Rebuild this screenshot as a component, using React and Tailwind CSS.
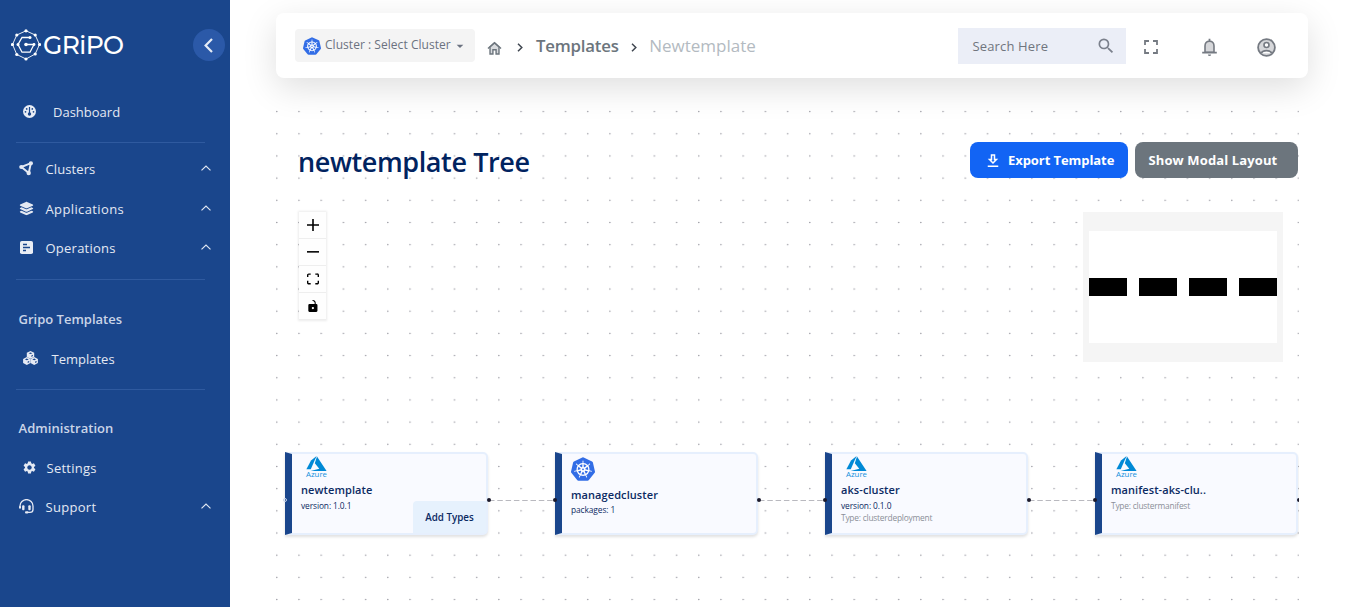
import React from "react";
import { FaLayerGroup } from "react-icons/fa6";
import { MdSettings, MdSearch, MdArrowDropDown, MdOutlineDownload } from "react-icons/md";
import { SiKubernetes } from "react-icons/si";

function GripoMark() {
  const outer = [[15, 1.8], [24.2, 6], [28.5, 15.5], [24.2, 25], [15, 30], [5.8, 25.5], [1.5, 15.5], [5.8, 6]];
  return (
    <svg className="h-8 w-[30px] shrink-0" viewBox="0 0 30 32" fill="none" stroke="#fff">
      <polygon points={outer.map((p) => p.join(",")).join(" ")} strokeWidth="0.9" />
      {outer.map(([x, y]) => (
        <circle key={x + "-" + y} cx={x} cy={y} r="1.6" fill="#fff" stroke="none" />
      ))}
      <path d="M19 8.5H11L7 15.5L11 23.2H19L23 15.5H15" strokeWidth="1.3" />
      <circle cx="19" cy="8.5" r="1.5" fill="#fff" stroke="none" />
      <circle cx="7" cy="15.5" r="1.5" fill="#fff" stroke="none" />
      <circle cx="15" cy="15.5" r="1.8" fill="#fff" stroke="none" />
      <circle cx="23" cy="15.5" r="1.4" fill="#fff" stroke="none" />
    </svg>
  );
}

function GaugeIcon() {
  return (
    <svg className="h-[13px] w-[13px]" viewBox="0 0 13 13">
      <circle cx="6.5" cy="6.5" r="6.5" fill="#e9edf5" />
      <g fill="#1a468c">
        <rect x="5.9" y="2" width="1.2" height="6.5" />
        <circle cx="6.5" cy="9" r="1.7" />
        <circle cx="3.7" cy="3.9" r="0.85" />
        <circle cx="9.3" cy="3.9" r="0.85" />
        <circle cx="2.5" cy="6.8" r="0.85" />
        <circle cx="10.5" cy="6.8" r="0.85" />
      </g>
    </svg>
  );
}

function NodesIcon() {
  return (
    <svg className="h-[15px] w-[15px]" viewBox="0 0 15 15" fill="#e4e9f3" stroke="#e4e9f3">
      <path d="M2.4 6L11.8 2.2L9.8 12Z" fill="none" strokeWidth="1.9" />
      <circle cx="2.3" cy="6" r="2.1" stroke="none" />
      <circle cx="11.9" cy="2.3" r="2.1" stroke="none" />
      <circle cx="9.7" cy="12" r="2.2" stroke="none" />
    </svg>
  );
}

function ReportIcon() {
  return (
    <svg className="h-[13px] w-[13px]" viewBox="0 0 13 13">
      <rect width="13" height="13" rx="1.8" fill="#e9edf5" />
      <path d="M3 3.5H7M3 6.5H10M3 9.5H6" stroke="#1a468c" strokeWidth="1.4" />
    </svg>
  );
}

function CubesIcon() {
  const cubes = [[7.5, 3.9], [3.8, 10], [11.2, 10]];
  return (
    <svg className="h-[14px] w-[15px]" viewBox="0 0 15 14">
      {cubes.map(([x, y]) => (
        <g key={x} transform={`translate(${x} ${y})`}>
          <path d="M0 -3.9L3.7 -2.1V2.1L0 3.9L-3.7 2.1V-2.1Z" fill="#e6eaf4" />
          <path d="M0 -2.5L1.9 -1.6L0 -0.8L-1.9 -1.6Z" fill="#1a468c" />
          <path d="M0.9 0.6L2.4 -0.1V1.2L0.9 2Z" fill="#1a468c" />
        </g>
      ))}
    </svg>
  );
}

function SupportIcon() {
  return (
    <svg className="h-[15px] w-[15px]" viewBox="0 0 15 15" fill="none" stroke="#e6eaf4">
      <path d="M1 9V7A6.4 6.3 0 0 1 14 7V10.5C14 12.3 12.8 13.4 11 13.4H8" strokeWidth="1.3" />
      <path d="M1 7.2V9.6" strokeWidth="2" />
      <rect x="3.1" y="6.3" width="2.4" height="4.9" rx="0.9" fill="#e6eaf4" stroke="none" />
      <rect x="9.3" y="6.3" width="2.4" height="4.9" rx="0.9" fill="#e6eaf4" stroke="none" />
      <rect x="6" y="12.2" width="3.4" height="2.4" rx="1" fill="#e6eaf4" stroke="none" />
    </svg>
  );
}

function Chevron() {
  return (
    <svg className="mb-[2px] ml-auto h-[6px] w-[10px]" viewBox="0 0 10 6" fill="none" stroke="#dfe6f2" strokeWidth="1.2">
      <path d="M0.5 5.4L5 1L9.5 5.4" />
    </svg>
  );
}

function NavItem({ icon, label, className, gap, expandable }) {
  return (
    <div className={"flex items-center pr-[19px] text-[#e4e9f3] " + className}>
      <span className="flex shrink-0 items-center justify-center pb-[2px]">{icon}</span>
      <span className={"text-[13px] leading-5 " + gap}>{label}</span>
      {expandable && <Chevron />}
    </div>
  );
}

function Divider() {
  return <div className="ml-4 h-px w-[189px] shrink-0 bg-[#2f5a9f]" />;
}

function SectionTitle({ children, className }) {
  return <div className={"pl-[18.5px] text-[13px] leading-5 font-semibold text-[#cad5e8] " + className}>{children}</div>;
}

function Sidebar() {
  return (
    <aside className="flex h-full w-[230px] shrink-0 flex-col bg-[#1a468c]">
      <div className="flex h-[90px] items-center pr-[5px] pl-[11px]">
        <GripoMark />
        <span className="ml-[2px] font-[Montserrat,Lato,sans-serif] text-[25px] leading-8 font-medium tracking-[-0.6px] text-white">GRiPO</span>
        <button className="ml-auto flex h-8 w-8 items-center justify-center rounded-full bg-[#2b59a8] pr-[2px]">
          <svg className="h-[15px] w-[9px]" viewBox="0 0 9 15" fill="none" stroke="#e6ecf6" strokeWidth="2.2">
            <path d="M8 1L1.6 7.5L8 14" />
          </svg>
        </button>
      </div>
      <NavItem className="mt-[11px] h-[22px] pl-[23px]" gap="ml-[17px]" label="Dashboard" icon={<GaugeIcon />} />
      <div className="h-[19px]" />
      <Divider />
      <NavItem className="mt-[15px] h-[22px] pl-[19px]" gap="ml-[11.5px] tracking-[0.1px]" label="Clusters" icon={<NodesIcon />} expandable />
      <NavItem className="mt-[18px] h-[22px] pl-[19px]" gap="ml-[11.5px] tracking-[0.38px]" label="Applications" icon={<FaLayerGroup size={15} />} expandable />
      <NavItem className="mt-[17px] h-[22px] pl-5" gap="ml-[12.5px] tracking-[0.24px]" label="Operations" icon={<ReportIcon />} expandable />
      <div className="h-5" />
      <Divider />
      <SectionTitle className="mt-[29px]">Gripo Templates</SectionTitle>
      <NavItem className="mt-[19px] h-[22px] pl-[23px]" gap="ml-[13.5px]" label="Templates" icon={<CubesIcon />} />
      <div className="h-[19px]" />
      <Divider />
      <SectionTitle className="mt-[28px] tracking-[0.05px]">Administration</SectionTitle>
      <NavItem className="mt-[19px] h-[22px] pl-[22px]" gap="ml-[9.5px] tracking-[0.25px]" label="Settings" icon={<MdSettings size={15} />} />
      <NavItem className="mt-[17px] h-[22px] pl-[19px]" gap="ml-[11.5px] tracking-[0.3px]" label="Support" icon={<SupportIcon />} expandable />
    </aside>
  );
}

function Kubernetes({ size }) {
  return (
    <span className="flex items-center justify-center rounded-full bg-[radial-gradient(circle,#fff_60%,transparent_61%)]">
      <SiKubernetes size={size} color="#326de6" />
    </span>
  );
}

function Crumb() {
  return (
    <svg className="h-[9px] w-[6px] shrink-0" viewBox="0 0 6 9" fill="none" stroke="#3f4650" strokeWidth="1.5">
      <path d="M1 0.8L4.8 4.5L1 8.2" />
    </svg>
  );
}

function Header() {
  return (
    <header className="relative z-10 mt-[13px] ml-[46px] flex h-[65px] w-[1032px] shrink-0 items-center rounded-lg bg-white shadow-[0_10px_34px_rgba(0,0,0,0.13)]">
      <div className="ml-[19px] flex h-[33px] w-[180px] items-center rounded bg-[#f4f4f4] pl-2">
        <Kubernetes size={18} />
        <span className="ml-[4px] pb-[1px] text-[12px] leading-4 tracking-[0.04px] whitespace-nowrap text-[#6b7280]">Cluster : Select Cluster</span>
        <MdArrowDropDown className="ml-[1px] shrink-0" size={16} color="#6b7280" />
      </div>
      <svg className="mt-[5px] ml-[12px] h-[14px] w-[15px] shrink-0" viewBox="0 0 16 15" fill="#d9dbde" stroke="#6c757d" strokeWidth="1.5">
        <path d="M1 8L8 1.7L15 8" fill="none" />
        <path d="M3.2 6.4V13.9H6.3V9.3H9.7V13.9H12.8V6.4L8 2.1Z" />
      </svg>
      <div className="mt-[3px] ml-[15px] flex"><Crumb /></div>
      <span className="mt-[1px] ml-[13px] text-[16.8px] leading-6 font-semibold tracking-[-0.2px] text-[#6c757d]">Templates</span>
      <div className="mt-[4px] ml-[12px] flex"><Crumb /></div>
      <span className="ml-[12.5px] text-[17px] leading-6 text-[#b3bac1]">Newtemplate</span>
      <div className="mr-[18px] ml-auto flex h-9 w-[168px] shrink-0 items-center justify-between bg-[#ebeef7] pr-[10px] pl-[14.5px]">
        <span className="text-[13px] leading-5 tracking-[0.15px] text-[#70757e]">Search Here</span>
        <MdSearch size={20} color="#7b808c" />
      </div>
      <svg className="mt-[3px] h-[14px] w-[14px] shrink-0" viewBox="0 0 14 14" fill="none" stroke="#757a82" strokeWidth="1.8">
        <path d="M1 5V1H5M9 1H13V5M13 9V13H9M5 13H1V9" />
      </svg>
      <svg className="mt-[3px] ml-[43.5px] h-[18px] w-[15px] shrink-0" viewBox="0 0 15 18" fill="#d6d7da" stroke="#757a82">
        <path d="M3 14.3V8C3 5 4.8 3.2 7.5 3.2S12 5 12 8V14.3Z" strokeWidth="1.6" />
        <path d="M0.2 14.6H14.8M7.5 0.8V3" strokeWidth="1.8" fill="none" />
        <path d="M5.9 16.4H9.1A1.6 1.6 0 0 1 5.9 16.4Z" fill="#757a82" stroke="none" />
      </svg>
      <svg className="mt-[3px] mr-[32.5px] ml-10 h-[19px] w-[19px] shrink-0" viewBox="0 0 19 19" fill="none" stroke="#757a82" strokeWidth="1.8">
        <circle cx="9.5" cy="9.5" r="8.4" fill="#d6d7da" />
        <circle cx="9.5" cy="7" r="2.5" fill="#fff" strokeWidth="1.6" />
        <path d="M4 15.3C6.2 11.7 12.8 11.7 15 15.3" fill="#fff" strokeWidth="1.7" />
      </svg>
    </header>
  );
}

function DotGrid() {
  return (
    <svg className="absolute inset-0 h-full w-full">
      <defs>
        <pattern id="dots" x="0" y="2.5" width="22.21" height="22.18" patternUnits="userSpaceOnUse">
          <circle cx="0.8" cy="11.1" r="0.72" fill="#91919a" />
        </pattern>
      </defs>
      <rect width="100%" height="100%" fill="url(#dots)" />
    </svg>
  );
}

function Azure() {
  return (
    <div className="ml-[14px] flex w-[21px] flex-col items-center">
      <svg className="h-[15px] w-[21px]" viewBox="0 0 21 15" fill="#0089d6">
        <path d="M10.6 0L5 4.6L0.4 13.2H4.8Z" />
        <path d="M11 0.4L8.8 7.3L13.3 12.8L4.6 15H20.6Z" />
      </svg>
      <span className="text-[7.8px] leading-[7px] text-[#1590dc]">Azure</span>
    </div>
  );
}

function Node({ className, kube, title, lines, action }) {
  return (
    <div className={"absolute top-[354px] h-[83px] w-[203px] rounded-[5px] rounded-l-none border-2 border-l-[7px] border-[#e6effd] border-l-[#1a468c] bg-[#f9faff] shadow-[0_2px_3px_rgba(0,0,0,0.12)] " + className}>
      {kube ? (
        <div className="mt-[3px] ml-[9px] flex h-[30px] items-start"><Kubernetes size={24} /></div>
      ) : (
        <div className="mt-[2px] h-[26px]"><Azure /></div>
      )}
      <div className="ml-[9px] text-[11px] leading-4 font-semibold tracking-[0.08px] text-[#0b2a63]">{title}</div>
      {lines.map(([text, tone], i) => (
        <div key={text} className={"ml-[9px] text-[8.4px] leading-3 " + tone + (i === 0 ? (kube ? " mt-[1px]" : " mt-[2px]") : "")}>{text}</div>
      ))}
      {action && (
        <div className="absolute right-0 bottom-0 flex h-8 w-[73px] items-center justify-center rounded-tl bg-[#e6f1fd] pt-[2px] text-[9.8px] font-semibold text-[#0b2a63]">{action}</div>
      )}
    </div>
  );
}

function Handle({ className }) {
  return <span className={"absolute top-[400px] h-1 w-1 rounded-full " + className} />;
}

function Edge({ className }) {
  return (
    <svg className={"absolute top-[401px] h-[3px] w-[66px] " + className} viewBox="0 0 66 3">
      <path d="M0 1.5H66" stroke="#b9b9bf" strokeWidth="1.1" strokeDasharray="5.5 2.8" />
    </svg>
  );
}

const navy = "text-[#0b2a63] tracking-[-0.1px]";
const gray = "text-[#8b8f98] tracking-[-0.22px]";

function ControlButton({ children }) {
  return <button className="flex h-[27px] w-[27px] items-center justify-center border-b border-[#eee] bg-[#fefefe]">{children}</button>;
}

function Canvas() {
  return (
    <section className="relative mt-5 ml-[46px] min-h-0 w-[1023px] flex-1 overflow-hidden">
      <DotGrid />
      <div className="relative mt-11 flex h-9 items-center pr-[1px] pl-[22px]">
        <h1 className="pt-[3px] text-[27px] leading-9 font-semibold tracking-[-0.4px] text-[#01235f]">newtemplate Tree</h1>
        <button className="ml-auto flex h-9 w-[158px] items-center rounded-lg bg-[#1264f4] pt-[1px] pl-[14px] text-[13px] font-bold text-white">
          <MdOutlineDownload size={18} />
          <span className="ml-[6px] tracking-[-0.07px] whitespace-nowrap">Export Template</span>
        </button>
        <button className="ml-[7px] h-9 w-[163px] rounded-lg bg-[#6c757d] pt-[1px] pl-[13.5px] text-left text-[13px] font-bold tracking-[0.12px] whitespace-nowrap text-white">Show Modal Layout</button>
      </div>

      <div className="absolute top-[114px] left-[23px] flex flex-col shadow-[0_0_2px_1px_rgba(0,0,0,0.08)]">
        <ControlButton>
          <svg className="h-3 w-3" viewBox="0 0 32 32"><path d="M32 18.133H18.133V32h-4.266V18.133H0v-4.266h13.867V0h4.266v13.867H32z" /></svg>
        </ControlButton>
        <ControlButton>
          <svg className="h-[2px] w-3" viewBox="0 0 32 5"><path d="M0 0h32v4.2H0z" /></svg>
        </ControlButton>
        <ControlButton>
          <svg className="h-3 w-3" viewBox="0 0 32 30"><path d="M3.692 4.63c0-.53.4-.938.939-.938h5.215V0H4.708C2.13 0 0 2.054 0 4.63v5.216h3.692V4.631zM27.354 0h-5.2v3.692h5.17c.53 0 .984.4.984.939v5.215H32V4.631A4.624 4.624 0 0027.354 0zm.954 24.83c0 .532-.4.94-.939.94h-5.215v3.768h5.215c2.577 0 4.631-2.13 4.631-4.707v-5.139h-3.692v5.139zm-23.677.94c-.531 0-.939-.4-.939-.94v-5.138H0v5.139c0 2.577 2.13 4.707 4.708 4.707h5.138V25.77H4.631z" /></svg>
        </ControlButton>
        <ControlButton>
          <svg className="h-3 w-3" viewBox="0 0 25 32"><path d="M21.333 10.667H19.81V7.619C19.81 3.429 16.38 0 12.19 0c-4.114 1.828-1.37 2.133.305 2.438 1.676.305 4.42 2.59 4.42 5.181v3.048H3.047A3.056 3.056 0 000 13.714v15.238A3.056 3.056 0 003.048 32h18.285a3.056 3.056 0 003.048-3.048V13.714a3.056 3.056 0 00-3.048-3.047zM12.19 24.533a3.056 3.056 0 01-3.047-3.047 3.056 3.056 0 013.047-3.048 3.056 3.056 0 013.048 3.048 3.056 3.056 0 01-3.048 3.047z" /></svg>
        </ControlButton>
      </div>

      <div className="absolute top-[114px] left-[807px] flex h-[150px] w-[200px] bg-[#f5f5f5] px-[6px] py-[19px]">
        <div className="flex h-full w-full items-center justify-between bg-white">
          <div className="h-[18px] w-[38px] bg-black" />
          <div className="h-[18px] w-[38px] bg-black" />
          <div className="h-[18px] w-[38px] bg-black" />
          <div className="h-[18px] w-[38px] bg-black" />
        </div>
      </div>

      <Edge className="left-[213px]" />
      <Edge className="left-[483px]" />
      <Edge className="left-[753px]" />
      <Node className="left-[9px]" title="newtemplate" lines={[["version: 1.0.1", navy]]} action="Add Types" />
      <Node className="left-[279px]" kube title="managedcluster" lines={[["packages: 1", navy]]} />
      <Node className="left-[549px]" title="aks-cluster" lines={[["version: 0.1.0", navy], ["Type: clusterdeployment", gray]]} />
      <Node className="left-[819px]" title="manifest-aks-clu.." lines={[["Type: clustermanifest", gray]]} />
      <Handle className="left-[7px] border border-[#c7d3ea]" />
      <Handle className="left-[211px] bg-[#1a192b]" />
      <Handle className="left-[276.5px] bg-[#1a192b]" />
      <Handle className="left-[481px] bg-[#1a192b]" />
      <Handle className="left-[546.5px] bg-[#1a192b]" />
      <Handle className="left-[751px] bg-[#1a192b]" />
      <Handle className="left-[816.5px] bg-[#1a192b]" />
      <Handle className="left-[1021px] bg-[#1a192b]" />
    </section>
  );
}

export default function App() {
  return (
    <div className="flex h-[607px] w-[1346px] overflow-hidden bg-white font-['Open_Sans','Noto_Sans',sans-serif]">
      <Sidebar />
      <main className="flex min-w-0 flex-1 flex-col overflow-hidden">
        <Header />
        <Canvas />
      </main>
    </div>
  );
}
